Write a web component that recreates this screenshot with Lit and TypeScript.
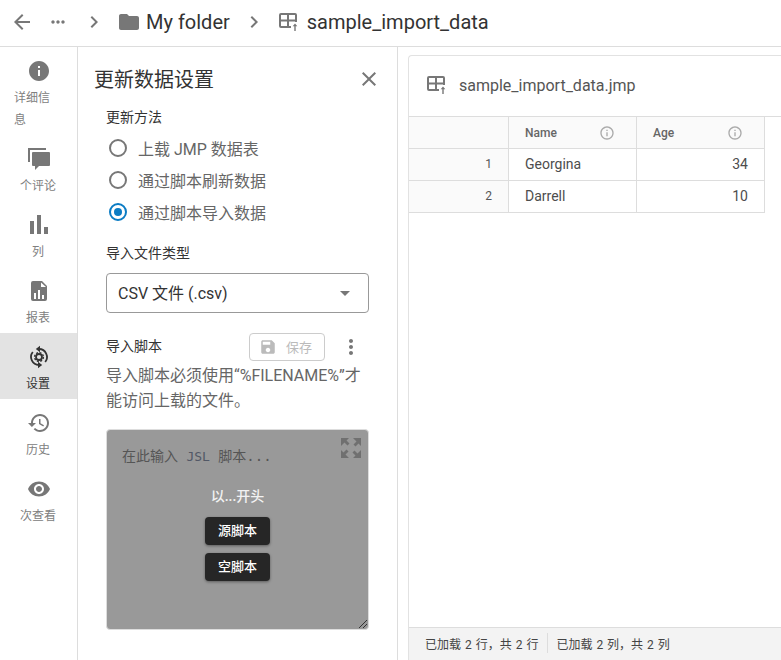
import { LitElement, html, css, svg } from "lit";
import { customElement } from "lit/decorators.js";

const ic = (d: string, size: number, cls = "") =>
  html`<svg class="ic ${cls}" width=${size} height=${size} viewBox="0 0 24 24" fill="currentColor">${svg`<path fill-rule="evenodd" d=${d}></path>`}</svg>`;

const tableIc = html`<svg class="ic" width="20" height="20" viewBox="0 0 20 20" fill="currentColor">
  ${svg`<path fill-rule="evenodd" d="M2 1h14a2 2 0 0 1 2 2v7h-2V9.500h-6V14h2v2H2a2 2 0 0 1-2-2V3a2 2 0 0 1 2-2zm0 2v4.500h6V3zm8 0v4.500h6V3zM2 9.500V14h6V9.500z"></path><path d="M16 11.500l2.300 2.800h-1.600V19h-1.400v-4.700h-1.600z"></path>`}
</svg>`;

const syncIc = html`<svg class="ic" width="24" height="24" viewBox="0 0 24 24">
  ${svg`<g fill="none" stroke="currentColor" stroke-width="1.800">
    <path d="M12 4a8 8 0 0 1 6.200 13"></path>
    <path d="M12 20a8 8 0 0 1-6.200-13"></path>
    <circle cx="12" cy="12" r="3"></circle>
    <circle cx="12" cy="12" r="4.400" stroke-width="1.400" stroke-dasharray="2 1.450"></circle>
  </g>
  <path fill="currentColor" d="M13 0.800v6.400L8.800 4zM11 16.800v6.400L15.200 20z"></path>`}
</svg>`;

const P = {
  back: "M20 11H7.830l5.590-5.590L12 4l-8 8 8 8 1.410-1.410L7.830 13H20v-2z",
  more: "M6 10c-1.100 0-2 .9-2 2s.9 2 2 2 2-.9 2-2-.9-2-2-2zm12 0c-1.100 0-2 .9-2 2s.9 2 2 2 2-.9 2-2-.9-2-2-2zm-6 0c-1.100 0-2 .9-2 2s.9 2 2 2 2-.9 2-2-.9-2-2-2z",
  chev: "M10 6L8.590 7.410 13.170 12l-4.580 4.590L10 18l6-6z",
  folder: "M10 4H4c-1.100 0-1.990.9-1.990 2L2 18c0 1.100.9 2 2 2h16c1.100 0 2-.9 2-2V8c0-1.100-.9-2-2-2h-8l-2-2z",
  info: "M12 2C6.480 2 2 6.480 2 12s4.480 10 10 10 10-4.480 10-10S17.520 2 12 2zm1 15h-2v-6h2v6zm0-8h-2V7h2v2z",
  comment: "M1 1h18v2H3v12H1zM6 5h16a1 1 0 0 1 1 1v12a1 1 0 0 1-1 1H12l-4 4v-4H6a1 1 0 0 1-1-1V6a1 1 0 0 1 1-1z",
  bars: "M3 8h4v13H3zM10 2h4v19h-4zM17 14h4v7h-4z",
  report: "M6 2h9l5 5v13a2 2 0 0 1-2 2H6a2 2 0 0 1-2-2V4a2 2 0 0 1 2-2zm8 1.500V8h5zM7 14v6h2v-6zM11 11v9h2v-9zM15 16v4h2v-4z",
  history: "M13 3c-4.970 0-9 4.030-9 9H1l3.890 3.890.07.14L9 12H6c0-3.870 3.130-7 7-7s7 3.130 7 7-3.130 7-7 7c-1.930 0-3.680-.79-4.940-2.060l-1.420 1.420C8.270 19.990 10.510 21 13 21c4.970 0 9-4.030 9-9s-4.030-9-9-9zm-1 5v5l4.280 2.540.72-1.210-3.500-2.080V8H12z",
  eye: "M12 4.500C7 4.500 2.730 7.610 1 12c1.730 4.390 6 7.500 11 7.500s9.270-3.110 11-7.500c-1.730-4.390-6-7.500-11-7.500zM12 17c-2.760 0-5-2.240-5-5s2.240-5 5-5 5 2.240 5 5-2.240 5-5 5zm0-8c-1.660 0-3 1.340-3 3s1.340 3 3 3 3-1.340 3-3-1.340-3-3-3z",
  close: "M19 6.410L17.590 5 12 10.590 6.410 5 5 6.410 10.590 12 5 17.590 6.410 19 12 13.410 17.590 19 19 17.590 13.410 12z",
  save: "M17 3H5c-1.110 0-2 .9-2 2v14c0 1.100.89 2 2 2h14c1.100 0 2-.9 2-2V7l-4-4zm-5 16c-1.660 0-3-1.340-3-3s1.340-3 3-3 3 1.340 3 3-1.340 3-3 3zm3-10H5V5h10v4z",
  vert: "M12 8c1.100 0 2-.9 2-2s-.9-2-2-2-2 .9-2 2 .9 2 2 2zm0 2c-1.100 0-2 .9-2 2s.9 2 2 2 2-.9 2-2-.9-2-2-2zm0 6c-1.100 0-2 .9-2 2s.9 2 2 2 2-.9 2-2-.9-2-2-2z",
  infoO: "M11 7h2v2h-2zm0 4h2v6h-2zm1-9C6.480 2 2 6.480 2 12s4.480 10 10 10 10-4.480 10-10S17.520 2 12 2zm0 18c-4.410 0-8-3.590-8-8s3.590-8 8-8 8 3.590 8 8-3.590 8-8 8z",
  expand: "M2 2h8L7.500 4.500 10.500 7.500 8.500 9.500 5.500 6.500 4 8 2 10zM22 2v8L19.500 7.500 16.500 10.500 14.500 8.500 17.500 5.500 14 2zM2 22v-8l2.500 2.500 3-3 2 2-3 3L10 22zM22 22h-8l2.500-2.500-3-3 2-2 3 3L22 14z",
};

const NAV: [unknown, string, boolean?][] = [
  [ic(P.info, 24), "详细信息"],
  [ic(P.comment, 24), "个评论"],
  [ic(P.bars, 24), "列"],
  [ic(P.report, 24), "报表"],
  [syncIc, "设置", true],
  [ic(P.history, 24), "历史"],
  [ic(P.eye, 24), "次查看"],
];

@customElement("app-root")
export class AppRoot extends LitElement {
  static styles = css`
    :host {
      display: block;
      width: 781px;
      height: 660px;
      overflow: hidden;
      background: #fff;
      font-family: Roboto, "Noto Sans CJK SC", sans-serif;
      color: #333;
    }
    .ic { display: block; flex: none; }
    .top {
      height: 47px;
      box-sizing: border-box;
      padding: 0 0 2px 10px;
      border-bottom: 1px solid #ddd;
      display: flex;
      align-items: center;
      color: #777;
    }
    .crumb { font-size: 20px; color: #333; white-space: nowrap; }
    .back { margin-right: 12px; }
    .dots { width: 24px; margin-right: 12px; display: flex; justify-content: center; }
    .ch1 { margin-right: 11px; }
    .ch2 { margin: 0 13px 0 12px; }
    .fold { margin-right: 5px; }
    .tb { margin-right: 8px; }
    .main {
      display: grid;
      grid-template-columns: 78px 320px 1fr;
      height: 613px;
    }
    nav { border-right: 1px solid #ddd; }
    .item {
      height: 66px;
      box-sizing: border-box;
      padding-top: 12px;
      display: flex;
      flex-direction: column;
      align-items: center;
      color: #777;
    }
    .item.wrap { height: 88px; }
    .item.on { background: #e3e3e3; color: #333; }
    .lab {
      margin: 4px 1px 0 0;
      font-size: 12px;
      line-height: 22px;
      max-width: 47.9px;
      color: #808080;
    }
    .on .lab { color: #333; }
    .panel {
      border-right: 1px solid #ddd;
      display: flex;
      flex-direction: column;
    }
    .phead {
      height: 40px;
      margin-top: 12px;
      display: flex;
      align-items: center;
      justify-content: space-between;
      padding: 0 16px;
      font-size: 20px;
      color: #333;
    }
    .phead span { margin-bottom: 2px; }
    .phead .ic { color: #777; }
    .body {
      padding: 0 28px;
      display: flex;
      flex-direction: column;
    }
    .lb { font-size: 14px; line-height: 20px; color: #333; }
    .m1 { margin-top: 8px; }
    .radios { margin-top: 5px; display: flex; flex-direction: column; }
    .radio {
      height: 32px;
      display: flex;
      align-items: center;
      font-size: 16px;
      color: #666;
      gap: 11px;
      padding-left: 3px;
    }
    .circle {
      width: 18px;
      height: 18px;
      box-sizing: border-box;
      border: 2px solid #777;
      border-radius: 50%;
      display: flex;
      align-items: center;
      justify-content: center;
      flex: none;
    }
    .circle.on { border-color: #0b7cc4; }
    .circle.on::after {
      content: "";
      width: 8px;
      height: 8px;
      border-radius: 50%;
      background: #0b7cc4;
    }
    .m2 { margin-top: 15px; }
    .sel {
      margin-top: 10px;
      height: 40px;
      box-sizing: border-box;
      border: 1px solid #999;
      border-radius: 4px;
      display: flex;
      align-items: center;
      justify-content: space-between;
      padding: 0 18px 2px 11px;
      font-size: 16px;
      color: #333;
    }
    .caret {
      width: 0;
      height: 0;
      margin-top: 2px;
      border-left: 5px solid transparent;
      border-right: 5px solid transparent;
      border-top: 5px solid #777;
    }
    .srow {
      margin-top: 20px;
      height: 28px;
      display: flex;
      align-items: center;
    }
    .srow .lb { flex: 1; margin-bottom: 2px; }
    .saveb {
      width: 76px;
      height: 28px;
      box-sizing: border-box;
      border: 1px solid #ccc;
      border-radius: 4px;
      display: flex;
      align-items: center;
      padding-left: 9px;
      gap: 9px;
      font-size: 13px;
      color: #bbb;
    }
    .saveb span { margin-bottom: 2px; }
    .vert { margin-left: 14px; color: #777; margin-right: 6px; }
    .desc {
      margin-top: 2px;
      font-size: 16px;
      line-height: 25px;
      color: #666;
    }
    .script {
      margin-top: 16px;
      height: 201px;
      box-sizing: border-box;
      background: #999;
      border: 1px solid #ddd;
      border-radius: 4px;
      position: relative;
      font-family: "DejaVu Sans Mono", "Noto Sans CJK SC", monospace;
      font-size: 14px;
      color: #555;
      padding: 17px 15px;
      line-height: 18px;
    }
    .script .ph { white-space: nowrap; }
    .script .jsl { color: #525866; font-size: 13px; }
    .expand { position: absolute; top: 6px; right: 5px; color: #707070; }
    .overlay {
      position: absolute;
      left: 0;
      right: 0;
      top: 56px;
      display: flex;
      flex-direction: column;
      align-items: center;
      font-family: Roboto, "Noto Sans CJK SC", sans-serif;
    }
    .ovt { font-size: 14px; line-height: 20px; font-weight: 500; color: #f2f2f2; }
    .btn {
      width: 65px;
      height: 28px;
      margin-top: 8px;
      background: #262626;
      color: #fff;
      border-radius: 4px;
      box-shadow: 0 1px 3px rgba(0, 0, 0, 0.4);
      font-size: 13px;
      font-weight: 500;
      display: flex;
      align-items: center;
      justify-content: center;
    }
    .ovt + .btn { margin-top: 11px; }
    .grip {
      position: absolute;
      right: 1px;
      bottom: 1px;
      width: 8px;
      height: 8px;
      background: linear-gradient(135deg, transparent 45%, #333 45%, #333 55%, transparent 55%, transparent 70%, #333 70%, #333 80%, transparent 80%);
    }
    .right { padding: 8px 0 0 10px; display: flex; }
    .card {
      flex: 1;
      border: 1px solid #e2e2e2;
      border-right: none;
      border-bottom: none;
      border-top-left-radius: 4px;
      display: flex;
      flex-direction: column;
    }
    .chead {
      height: 61px;
      flex: none;
      box-sizing: border-box;
      border-bottom: 1px solid #ddd;
      display: flex;
      align-items: center;
      padding: 0 0 2px 18px;
      gap: 12px;
      font-size: 16px;
      color: #555;
    }
    .chead .ic { color: #777; }
    .tbl {
      flex: 1;
      display: grid;
      grid-template-columns: 100px 128px 128px;
      grid-auto-rows: 32px;
      align-content: start;
    }
    .c {
      box-sizing: border-box;
      border-right: 1px solid #ddd;
      border-bottom: 1px solid #ddd;
      display: flex;
      align-items: center;
      padding: 0 16px 2px;
      font-size: 14px;
      color: #4d4d4d;
    }
    .c.h {
      background: #fafafa;
      font-size: 12px;
      font-weight: 500;
      color: #666;
      justify-content: space-between;
      padding: 0 21px 0 16px;
    }
    .c.h .ic { color: #aaa; }
    .c.n {
      background: #fafafa;
      justify-content: flex-end;
      font-size: 12px;
      color: #555;
    }
    .c.v { justify-content: flex-end; }
    .foot {
      height: 33px;
      flex: none;
      box-sizing: border-box;
      border-top: 1px solid #ddd;
      background: #f3f3f3;
      display: flex;
      align-items: center;
      padding: 0 0 2px 16px;
      font-size: 12px;
      word-spacing: 1px;
      color: #444;
    }
    .foot .sep { width: 1px; height: 20px; background: #ddd; margin: 0 8px 0 9px; }
  `;

  render() {
    return html`
      <div class="top">
        <span class="back">${ic(P.back, 24)}</span>
        <span class="dots">${ic(P.more, 20)}</span>
        <span class="ch1">${ic(P.chev, 24)}</span>
        <span class="fold">${ic(P.folder, 24)}</span>
        <span class="crumb">My folder</span>
        <span class="ch2">${ic(P.chev, 24)}</span>
        <span class="tb">${tableIc}</span>
        <span class="crumb">sample_import_data</span>
      </div>
      <div class="main">
        <nav>
          ${NAV.map(
            ([icon, t, on]) => html`<div class="item ${on ? "on" : ""} ${t.length > 3 ? "wrap" : ""}">
              ${icon}<div class="lab">${t}</div>
            </div>`
          )}
        </nav>
        <section class="panel">
          <div class="phead"><span>更新数据设置</span>${ic(P.close, 24)}</div>
          <div class="body">
            <div class="lb m1">更新方法</div>
            <div class="radios">
              <div class="radio"><span class="circle"></span>上载 JMP 数据表</div>
              <div class="radio"><span class="circle"></span>通过脚本刷新数据</div>
              <div class="radio"><span class="circle on"></span>通过脚本导入数据</div>
            </div>
            <div class="lb m2">导入文件类型</div>
            <div class="sel"><span>CSV 文件 (.csv)</span><span class="caret"></span></div>
            <div class="srow">
              <div class="lb">导入脚本</div>
              <div class="saveb">${ic(P.save, 18)}<span>保存</span></div>
              <span class="vert">${ic(P.vert, 24)}</span>
            </div>
            <div class="desc">导入脚本必须使用“%FILENAME%”才能访问上载的文件。</div>
            <div class="script">
              <div class="ph">在此输入 <span class="jsl">JSL</span> 脚本...</div>
              <span class="expand">${ic(P.expand, 24)}</span>
              <div class="overlay">
                <div class="ovt">以...开头</div>
                <div class="btn">源脚本</div>
                <div class="btn">空脚本</div>
              </div>
              <span class="grip"></span>
            </div>
          </div>
        </section>
        <section class="right">
          <div class="card">
            <div class="chead">${tableIc}<span>sample_import_data.jmp</span></div>
            <div class="tbl">
              <div class="c h"></div>
              <div class="c h"><span>Name</span>${ic(P.infoO, 16)}</div>
              <div class="c h"><span>Age</span>${ic(P.infoO, 16)}</div>
              <div class="c n">1</div>
              <div class="c">Georgina</div>
              <div class="c v">34</div>
              <div class="c n">2</div>
              <div class="c">Darrell</div>
              <div class="c v">10</div>
            </div>
            <div class="foot">
              <span>已加载 2 行，共 2 行</span><span class="sep"></span><span>已加载 2 列，共 2 列</span>
            </div>
          </div>
        </section>
      </div>
    `;
  }
}
